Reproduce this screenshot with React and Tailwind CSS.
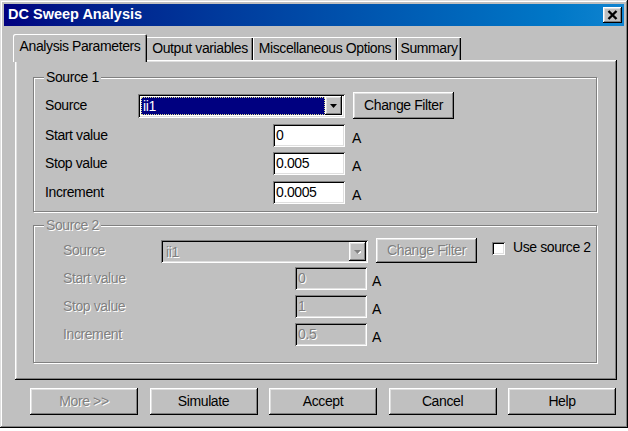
import React from "react";

const raised =
  "shadow-[inset_-1px_-1px_0_#000,inset_1px_1px_0_#fff,inset_-2px_-2px_0_#808080,inset_2px_2px_0_#dfdfdf]";
const sunken =
  "shadow-[inset_1px_1px_0_#808080,inset_-1px_-1px_0_#fff,inset_2px_2px_0_#000,inset_-2px_-2px_0_#dfdfdf]";
const dis = "text-[#808080] [text-shadow:1px_1px_0_#fff]";

function Arrow({ disabled }) {
  return (
    <svg width="7" height="4" viewBox="0 0 7 4" className="block">
      {disabled && <polygon points="1,1 8,1 4.5,5" fill="#fff" />}
      <polygon points="0,0 7,0 3.5,4" fill={disabled ? "#808080" : "#000"} />
    </svg>
  );
}

function Group({ title, disabled, className, children }) {
  return (
    <div
      className={
        "relative w-[564px] border border-[#808080] shadow-[inset_1px_1px_0_#fff,1px_1px_0_#fff] " +
        className
      }
    >
      <span
        className={
          "absolute left-[10px] top-[-9px] bg-[#c0c0c0] px-[2px] leading-[16px] " +
          (disabled ? dis : "text-black")
        }
      >
        {title}
      </span>
      {children}
    </div>
  );
}

export default function App() {
  return (
    <div className="w-[628px] h-[431px] bg-white font-['Liberation_Sans',Arial,sans-serif] text-[14px] tracking-[-0.4px] text-black">
      <div className="w-[628px] h-[428px] bg-[#c0c0c0] p-[4px] flex flex-col shadow-[inset_-1px_-1px_0_#000,inset_1px_1px_0_#dfdfdf,inset_-2px_-2px_0_#808080,inset_2px_2px_0_#fff]">
        {/* Title bar */}
        <div className="h-[22px] shrink-0 flex items-center justify-between pl-[4px] pr-[2px] bg-linear-to-r from-[#000080] to-[#1084d0]">
          <span className="text-white font-bold text-[14.5px] tracking-normal">DC Sweep Analysis</span>
          <div className={"w-[19px] h-[16px] bg-[#c0c0c0] flex items-center justify-center " + raised}>
            <svg width="11" height="10" viewBox="0 0 11 10">
              <path d="M1.5 1 L9.5 9 M9.5 1 L1.5 9" stroke="#000" strokeWidth="2.4" />
            </svg>
          </div>
        </div>

        {/* Tabs */}
        <div className="mt-[8px] h-[26px] shrink-0 flex items-end ml-[9px]">
          <div className="relative z-10 w-[134px] h-[28px] -mb-[2px] bg-[#c0c0c0] rounded-t-[2px] flex justify-center pt-[4px] leading-[16px] shadow-[inset_1px_1px_0_#fff,inset_-1px_0_0_#000,inset_-2px_0_0_#808080]">
            Analysis Parameters
          </div>
          <div className="w-[106px] h-[23px] flex justify-center pt-[3px] leading-[16px] shadow-[inset_0_1px_0_#fff,inset_-1px_0_0_#000,inset_-2px_0_0_#808080]">
            Output variables
          </div>
          <div className="w-[144px] h-[23px] flex justify-center pt-[3px] leading-[16px] shadow-[inset_1px_1px_0_#fff,inset_-1px_0_0_#000,inset_-2px_0_0_#808080]">
            Miscellaneous Options
          </div>
          <div className="w-[64px] h-[23px] flex justify-center pt-[3px] leading-[16px] shadow-[inset_1px_1px_0_#fff,inset_-1px_0_0_#000,inset_-2px_0_0_#808080]">
            Summary
          </div>
        </div>

        {/* Panel */}
        <div className="ml-[11px] w-[602px] h-[320px] shrink-0 pt-[17px] pl-[18px] flex flex-col shadow-[inset_-1px_-1px_0_#000,inset_1px_1px_0_#fff,inset_-2px_-2px_0_#808080,inset_2px_2px_0_#dfdfdf]">
          <Group title="Source 1" className="h-[135px] pt-[14px] pl-[11px]">
            <div className="flex items-center h-[27px]">
              <span className="w-[93px]">Source</span>
              <div className={"w-[207px] h-[24px] bg-white flex items-center p-[3px] " + sunken}>
                <div className="flex-1 h-full bg-[#000080] outline-1 outline-dotted outline-[#d8d890] -outline-offset-1 text-white leading-[18px] pl-[2px]">
                  ii1
                </div>
                <div className={"w-[17px] h-[19px] bg-[#c0c0c0] flex items-center justify-center " + raised}>
                  <Arrow />
                </div>
              </div>
              <button className={"ml-[8px] w-[101px] h-[27px] bg-[#c0c0c0] flex items-center justify-center " + raised}>
                Change Filter
              </button>
            </div>
            {[
              ["Start value", "0", "mt-[5px]"],
              ["Stop value", "0.005", "mt-[5px]"],
              ["Increment", "0.0005", "mt-[6px]"],
            ].map(([l, v, m]) => (
              <div key={l} className={"flex items-center h-[23px] " + m}>
                <span className="w-[228px]">{l}</span>
                <div className={"w-[72px] h-[23px] bg-white pl-[3px] leading-[23px] " + sunken}>{v}</div>
                <span className="ml-[7px] mt-[5px]">A</span>
              </div>
            ))}
          </Group>

          <Group title="Source 2" disabled className="mt-[13px] h-[138px] pt-[12px] pl-[29px]">
            <div className="flex items-start h-[25px]">
              <span className={"w-[98px] mt-[4px] leading-[16px] " + dis}>Source</span>
              <div className={"mt-[2px] w-[207px] h-[23px] bg-[#c0c0c0] flex items-center p-[2px] " + sunken}>
                <div className={"flex-1 pl-[3px] leading-[18px] " + dis}>ii1</div>
                <div className={"w-[17px] h-[19px] bg-[#c0c0c0] flex items-center justify-center " + raised}>
                  <Arrow disabled />
                </div>
              </div>
              <button className={"ml-[8px] w-[101px] h-[25px] bg-[#c0c0c0] flex items-center justify-center " + raised + " " + dis}>
                Change Filter
              </button>
              <div className={"ml-[15px] mt-[4px] w-[13px] h-[13px] bg-white " + sunken}></div>
              <span className="ml-[8px] mt-[1px] leading-[16px]">Use source 2</span>
            </div>
            {[
              ["Start value", "0", "mt-[4px]"],
              ["Stop value", "1", "mt-[5px]"],
              ["Increment", "0.5", "mt-[5px]"],
            ].map(([l, v, m]) => (
              <div key={l} className={"flex items-center h-[23px] " + m}>
                <span className={"w-[232px] " + dis}>{l}</span>
                <div className={"w-[72px] h-[23px] bg-[#c0c0c0] pl-[3px] leading-[23px] " + sunken + " " + dis}>{v}</div>
                <span className="ml-[5px] mt-[5px]">A</span>
              </div>
            ))}
          </Group>
        </div>

        {/* Bottom buttons */}
        <div className="mt-[8px] ml-[26px] flex gap-[11.5px]">
          {["More >>", "Simulate", "Accept", "Cancel", "Help"].map((b, i) => (
            <button
              key={b}
              className={
                "w-[108px] h-[27px] bg-[#c0c0c0] flex items-center justify-center " +
                raised +
                (i === 0 ? " " + dis : "")
              }
            >
              {b}
            </button>
          ))}
        </div>
      </div>
    </div>
  );
}
